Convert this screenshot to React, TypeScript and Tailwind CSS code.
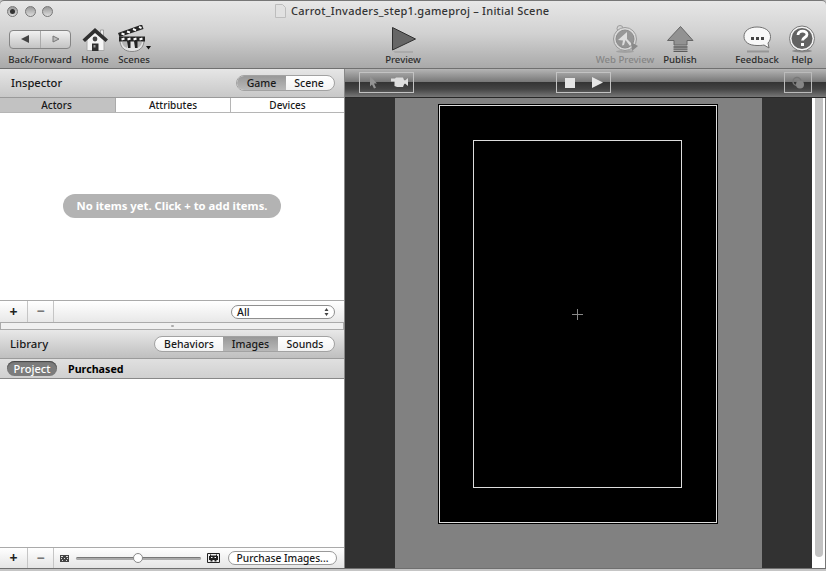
import type { ReactNode } from "react";

function ToolItem({ label, className, labelClass = "text-[#2c2c2c]", children }: { label: string; className: string; labelClass?: string; children: ReactNode }) {
  return (
    <div className={`flex h-[43px] shrink-0 flex-col items-center ${className}`}>
      <div className="flex h-[28px] items-center justify-center">{children}</div>
      <span className={`whitespace-nowrap pt-px text-[9.600px] font-medium leading-[12px] ${labelClass}`}>{label}</span>
    </div>
  );
}

function Light({ dot = false }: { dot?: boolean }) {
  return (
    <div className="flex h-[11px] w-[11px] items-center justify-center rounded-full border border-[#777] bg-linear-to-b from-[#999] to-[#ddd]">
      {dot && <div className="h-[5px] w-[5px] rounded-full bg-[#333]" />}
    </div>
  );
}

function HomeIcon() {
  return (
    <svg width="28" height="28" viewBox="0 0 28 28">
      <path d="M19.500 5h3v7h-3z" fill="#eee" stroke="#888" strokeWidth=".7" />
      <path d="M6 14v11.500h17V14l-9-7z" fill="#f5f5f5" stroke="#aaa" />
      <path d="M1.500 14.500 14 3l13 11.500-2.500 2.500L14 8 4 17z" fill="#303030" />
      <circle cx="14" cy="14" r="2.400" fill="#444" />
      <path d="M11 18.500h6.500V26H11z" fill="#303030" />
      <path d="M12.500 20h2v2.500h-2z" fill="#999" />
    </svg>
  );
}

function ScenesIcon() {
  return (
    <svg width="34" height="28" viewBox="0 0 34 28">
      <path d="M3 14v3c1 6 5 9.500 12 9.500S26 23 27 17v-3z" fill="#e2e2e2" stroke="#888" />
      <path d="M5 17h5v6C7 22 5.500 20 5 17m15 0h5c-.5 3-2 5-5 6z" fill="#b5b5b5" />
      <path d="M10 16h3.500v7H11m6-7h3.500v7H18" fill="#222" />
      <path d="M1 8 25-.5 26.500 4 2.500 12z" fill="#252525" />
      <path d="m4.500 8.500 3 1m2.500-3 3 1m3-3.500 3 1.300m3-3.500 2.500 1.200" stroke="#fff" strokeWidth="2" />
      <path d="M2 11.500h26v5H2z" fill="#252525" />
      <path d="m4.500 14.500 3-1m3 1 3-1m3 1 3-1m3 1 3-1" stroke="#fff" strokeWidth="2" />
      <path d="M29 21h5l-2.500 3.500z" fill="#111" />
    </svg>
  );
}

function WebIcon() {
  return (
    <svg width="28" height="28" viewBox="0 0 28 28" className="opacity-75">
      <ellipse cx="14" cy="26.500" rx="9" ry="1.500" fill="#999" />
      <circle cx="9" cy="3.500" r="3" fill="none" stroke="#888" />
      <circle cx="14" cy="14" r="11.500" fill="#ddd" stroke="#888" />
      <circle cx="14" cy="14" r="9" fill="#858585" stroke="#777" />
      <path d="m16 7-9 8 5 .5-1 5 2-.5 1.500-5 4.500 6 2-2-5-5z" fill="#e4e4e4" />
      <path d="m20 17 7 4-6 5z" fill="#777" />
    </svg>
  );
}

function Segment({ items, active }: { items: { name: string; width: string }[]; active: string }) {
  return (
    <div className="flex h-[16px] overflow-hidden rounded-full border border-[#a2a2a2] bg-linear-to-b from-white to-[#f2f2f2] text-[10.500px] font-medium leading-[15px]">
      {items.map((i) => (
        <div key={i.name} className={`text-center ${i.width} ${i.name === active ? "bg-linear-to-b from-[#999] to-[#b8b8b8]" : ""}`}>{i.name}</div>
      ))}
    </div>
  );
}

function Controls({ children }: { children?: ReactNode }) {
  return (
    <>
      <div className="w-[27px] text-center text-[#222]">+</div>
      <div className="h-full w-[27px] border-x border-[#c5c5c5] text-center text-[#777]">−</div>
      {children}
    </>
  );
}

export default function App() {
  return (
    <div className="flex h-[571px] w-[826px] flex-col overflow-hidden bg-[#c3c3c3] font-['Noto_Sans','Open_Sans',sans-serif] text-[11px] text-[#181818]">
      <header className="flex h-[69px] shrink-0 flex-col rounded-t-[4px] border-b border-[#707070] bg-linear-to-b from-[#e8e8e8] via-[#d1d1d1] to-[#a9a9a9] shadow-[inset_0_1px_0_#777]">
        <div className="flex h-[22px] items-center pl-[7px]">
          <div className="flex w-[268px] gap-[6.500px]"><Light dot /><Light /><Light /></div>
          <svg width="11" height="14" viewBox="0 0 11 14"><path d="M.5.5h7l3 3v10H.5z" fill="#e1e1e1" stroke="#bdbdbd" /></svg>
          <span className="ml-[5px] whitespace-nowrap text-[11px] font-medium tracking-[0.250px] text-[#343434]">Carrot_Invaders_step1.gameproj – Initial Scene</span>
        </div>
        <div className="flex pt-[3px]">
          <ToolItem label="Back/Forward" className="w-[80px]">
            <div className="flex h-[19px] w-[62px] rounded-[4px] border border-[#858585] bg-linear-to-b from-[#f1f1f1] to-[#c4c4c4]">
              <div className="flex w-[31px] items-center justify-center border-r border-[#aaa]"><svg width="8" height="8"><path d="M8 0v8L0 4z" fill="#444" /></svg></div>
              <div className="flex flex-1 items-center justify-center"><svg width="8" height="8"><path d="M1 1v6l6-3z" fill="#bbb" stroke="#777" /></svg></div>
            </div>
          </ToolItem>
          <ToolItem label="Home" className="w-[30px]"><HomeIcon /></ToolItem>
          <ToolItem label="Scenes" className="ml-[5px] w-[38px]"><ScenesIcon /></ToolItem>
          <ToolItem label="Preview" className="ml-[230px] w-[40px]">
            <svg width="28" height="28" viewBox="0 0 28 28"><path d="M4 26h20v2H6z" fill="#aaa" /><path d="M3.500 2.500v22.500L26.500 14z" fill="#666" stroke="#303030" /></svg>
          </ToolItem>
          <ToolItem label="Web Preview" className="ml-[172px] w-[60px]" labelClass="text-[#858585]"><WebIcon /></ToolItem>
          <ToolItem label="Publish" className="ml-[5px] w-[40px]">
            <svg width="28" height="28" viewBox="0 0 28 28"><path d="M14.500 1.500 1.500 15.500H8V20h13v-4.500h6z" fill="#929292" stroke="#666" /><path d="M7.500 22h14m-14 2.200h14m-14 2.200h14" stroke="#5b5b5b" strokeWidth="1.300" /></svg>
          </ToolItem>
          <ToolItem label="Feedback" className="ml-[32px] w-[50px]">
            <svg width="30" height="28" viewBox="0 0 30 28"><path d="M5 26.500h22" stroke="#969696" strokeWidth="2" /><path d="M15 2C7 2 2 6 2 11.500S7 20.500 15 20.500c3 0 5 0 7-.5l5 3-1-5c2-2 2.500-4 2.500-6.500C28.500 6 23 2 15 2z" fill="#f8f8f8" stroke="#707070" /><path d="M9 12h3v3H9zm5 0h3v3h-3zm5 0h3v3h-3z" fill="#444" /></svg>
          </ToolItem>
          <ToolItem label="Help" className="w-[40px]">
            <svg width="28" height="28" viewBox="0 0 28 28"><ellipse cx="14" cy="26" rx="10" ry="1.500" fill="#888" /><circle cx="14" cy="13.500" r="12.500" fill="#f4f4f4" stroke="#777" /><circle cx="14" cy="13.500" r="10.500" fill="#626262" /><path d="M10 10c0-5 9-5 9-.5 0 3-4.500 3-4.500 6" fill="none" stroke="#fff" strokeWidth="2.800" /><path d="M13 18h3v3h-3z" fill="#fff" /></svg>
          </ToolItem>
        </div>
      </header>

      <main className="flex h-[499px] shrink-0">
        <aside className="flex w-[345px] shrink-0 flex-col border-r border-[#888] bg-white">
          <section className="flex h-[29px] shrink-0 items-center justify-between border-b border-[#9a9a9a] bg-linear-to-b from-[#e6e6e6] to-[#c8c8c8] pl-[11px] pr-[9px]">
            <h2 className="text-[11.200px] font-medium">Inspector</h2>
            <Segment active="Game" items={[{ name: "Game", width: "w-[49px]" }, { name: "Scene", width: "w-[48px] pr-[2px]" }]} />
          </section>
          <nav className="flex h-[15px] shrink-0 border-b border-[#b5b5b5] text-center text-[10px] font-medium leading-[14px]">
            <div className="w-[116px] border-r border-[#aaa] bg-[#c2c2c2] pr-[2px]">Actors</div>
            <div className="w-[115px] border-r border-[#b5b5b5]">Attributes</div>
            <div className="flex-1">Devices</div>
          </nav>
          <div className="flex h-[187px] shrink-0 justify-center pt-[81px]">
            <div className="h-[24px] w-[218px] rounded-full bg-[#b3b3b3] text-center text-[11.300px] font-bold leading-[24px] text-white">No items yet. Click + to add items.</div>
          </div>
          <div className="flex h-[22px] shrink-0 items-center border-t border-[#aaa] bg-linear-to-b from-white to-[#e8e8e8] text-[14px] font-bold leading-[20px]">
            <Controls />
            <div className="ml-[177px] flex h-[14px] w-[104px] items-center justify-between rounded-full border border-[#8f8f8f] bg-white px-[5px] text-[10.500px] font-medium">
              <span>All</span>
              <svg width="5" height="8" viewBox="0 0 5 8"><path d="M.5 3 2.500 0l2 3M.5 5l2 3 2-3" fill="#444" /></svg>
            </div>
          </div>
          <div className="flex h-[8px] shrink-0 items-center justify-center border border-[#aaa] bg-[#f0f0f0]"><div className="h-[2px] w-[3px] rounded-full bg-[#aaa]" /></div>
          <section className="flex h-[29px] shrink-0 items-center justify-between border-b border-[#9b9b9b] bg-linear-to-b from-[#e8e8e8] to-[#bfbfbf] pl-[10px] pr-[9px]">
            <h2 className="text-[11.400px] font-medium">Library</h2>
            <Segment active="Images" items={[{ name: "Behaviors", width: "w-[68px]" }, { name: "Images", width: "w-[55px]" }, { name: "Sounds", width: "w-[56px] pr-[2px]" }]} />
          </section>
          <nav className="flex h-[20px] shrink-0 items-center border-b border-[#888] bg-linear-to-b from-[#e0e0e0] to-[#d0d0d0] pl-[7px] font-bold">
            <div className="h-[15px] w-[50px] rounded-full bg-[#7c7c7c] text-center font-medium leading-[15px] text-white shadow-[inset_0_1px_1px_#444]">Project</div>
            <span className="ml-[11px] pt-px text-[10.700px] text-black">Purchased</span>
          </nav>
          <div className="flex-1" />
          <div className="flex h-[21px] shrink-0 items-center border-t border-[#aaa] bg-linear-to-b from-white to-[#e5e5e5] text-[14px] font-bold leading-[20px]">
            <Controls />
            <svg className="ml-[6px]" width="9" height="7" viewBox="0 0 9 7"><path d="M0 0h9v7H0z" fill="#444" /><path d="M1 1.500h2m3 0h2M1 3.500h1m2 0h1m2 0h1M2 5.500h1m3 0h1" stroke="#ddd" fill="none" /></svg>
            <div className="relative ml-[7px] h-[3px] w-[125px] rounded-full border-t border-[#777] bg-[#aaa]"><div className="absolute left-[57px] top-[-5px] h-[10px] w-[10px] rounded-full border border-[#888] bg-white" /></div>
            <svg className="ml-[6px]" width="13" height="10" viewBox="0 0 13 10"><path d="M.5.5h12v9H.5z" fill="#eee" stroke="#222" /><path d="M3 1.500h1v1h5v-1h1v1.500h1v4H9.500v1.500h-2V7h-2v1.500h-2V7H2V3h1z" fill="#222" /><path d="M4 4.500h1.500m2 0H9" stroke="#fff" /></svg>
            <div className="ml-[8px] h-[14px] w-[109px] rounded-full border border-[#999] bg-white text-center text-[10.200px] font-medium leading-[12px]">Purchase Images...</div>
          </div>
        </aside>

        <section className="flex min-w-0 flex-1 flex-col">
          <div className="flex h-[29px] shrink-0 items-start border-b border-[#282828] bg-[linear-gradient(180deg,#b5b5b5_0px,#777777_13px,#333333_13px,#444444_20px,#777777_28px)] pt-[3px]">
            <div className="ml-[14px] flex h-[21px] w-[55px] items-center border border-[#c3c3c3]">
              <svg className="ml-[9px]" width="9" height="13" viewBox="0 0 9 13"><path d="M1 0v10.500l2-2 2 4 2-.7-2-4.300h3z" fill="#939393" /></svg>
              <svg className="ml-[13px]" width="17" height="11" viewBox="0 0 17 11"><path d="M0 1.500h4l1-1h7l1 2.500 1 .5 3-2.500v8l-3-2.500-1 1-1 2.500H6L3.500 9V4.500H0z" fill="#ddd" /></svg>
            </div>
            <div className="ml-[142px] flex h-[21px] w-[55px] items-center border border-[#c3c3c3] pl-[8px]">
              <div className="h-[10px] w-[10px] bg-[#e5e5e5]" /><svg className="ml-[17px]" width="11" height="11"><path d="M0 0v11l11-5.500z" fill="#e5e5e5" /></svg>
            </div>
            <div className="ml-[173px] flex h-[21px] w-[28px] items-center justify-center border border-[#bbb]"><svg width="15" height="14" viewBox="0 0 15 14"><circle cx="6" cy="5.500" r="4" fill="none" stroke="#777" strokeWidth="1.500" /><circle cx="9" cy="8.500" r="4" fill="#858585" /></svg></div>
          </div>
          <div className="flex min-h-0 flex-1">
            <div className="flex w-[467px] shrink-0 justify-center bg-[#323232]">
              <div className="flex w-[367px] items-start justify-center bg-[#818181] pr-[2px] pt-[6px]">
                <div className="h-[420px] w-[280px] border border-black bg-black">
                  <div className="flex h-[418px] w-[278px] items-start justify-center border border-[#ddd] pt-[34px]">
                    <div className="flex h-[348px] w-[209px] items-center justify-center border border-[#ddd]"><svg width="11" height="11"><path d="M0 5.500h11M5.500 0v11" stroke="#888" /></svg></div>
                  </div>
                </div>
              </div>
            </div>
            <div className="flex flex-1 border-r border-[#777] bg-white pl-[3px]"><div className="h-[459px] w-[8px] rounded-b-full bg-[#c2c2c2]" /></div>
          </div>
        </section>
      </main>
      <footer className="h-[3px] shrink-0 border-t border-[#6f6f6f] bg-[#c5c5c5]" />
    </div>
  );
}
